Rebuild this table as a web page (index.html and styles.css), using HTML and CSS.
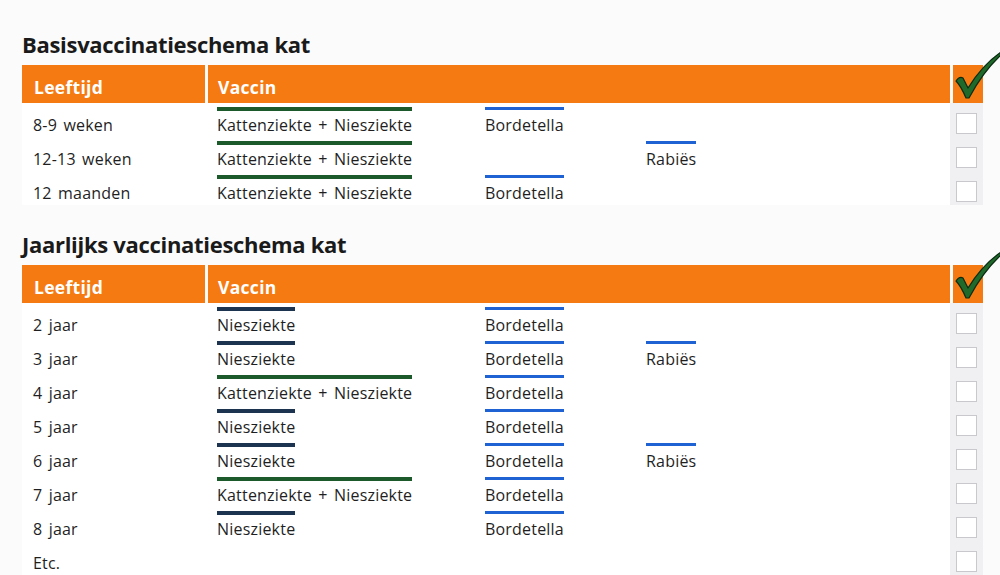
FILE: index.html
```html
<!DOCTYPE html>
<html lang="nl">
<head>
<meta charset="utf-8">
<title>Vaccinatieschema kat</title>
<link rel="stylesheet" href="styles.css">
</head>
<body>
<main class="page">
  <section class="schema">
    <h2 class="title">Basisvaccinatieschema kat</h2>
    <div class="table">
      <div class="head">
        <div class="hcell age">Leeftijd</div>
        <div class="hcell vac">Vaccin</div>
        <div class="hcell chk">
          <svg class="tick" viewBox="0 0 48 50" width="48" height="50"><path d="M2,30 C4,27 7,26 9,27 L14,37 C22,24 34,10 47,1 L48,3 C36,14 24,30 15,47 L12,47 C9,40 6,34 2,30 Z"/></svg>
        </div>
      </div>
      <div class="row">
        <div class="age">8-9 weken</div>
        <div class="vaccines"><span class="v green">Kattenziekte + Niesziekte</span><span class="v blue">Bordetella</span><span></span></div>
        <div class="box"><span></span></div>
      </div>
      <div class="row">
        <div class="age">12-13 weken</div>
        <div class="vaccines"><span class="v green">Kattenziekte + Niesziekte</span><span></span><span class="v blue">Rabiës</span></div>
        <div class="box"><span></span></div>
      </div>
      <div class="row">
        <div class="age">12 maanden</div>
        <div class="vaccines"><span class="v green">Kattenziekte + Niesziekte</span><span class="v blue">Bordetella</span><span></span></div>
        <div class="box"><span></span></div>
      </div>
    </div>
  </section>

  <section class="schema second">
    <h2 class="title">Jaarlijks vaccinatieschema kat</h2>
    <div class="table">
      <div class="head">
        <div class="hcell age">Leeftijd</div>
        <div class="hcell vac">Vaccin</div>
        <div class="hcell chk">
          <svg class="tick" viewBox="0 0 48 50" width="48" height="50"><path d="M2,30 C4,27 7,26 9,27 L14,37 C22,24 34,10 47,1 L48,3 C36,14 24,30 15,47 L12,47 C9,40 6,34 2,30 Z"/></svg>
        </div>
      </div>
      <div class="row">
        <div class="age">2 jaar</div>
        <div class="vaccines"><span class="v navy">Niesziekte</span><span class="v blue">Bordetella</span><span></span></div>
        <div class="box"><span></span></div>
      </div>
      <div class="row">
        <div class="age">3 jaar</div>
        <div class="vaccines"><span class="v navy">Niesziekte</span><span class="v blue">Bordetella</span><span class="v blue">Rabiës</span></div>
        <div class="box"><span></span></div>
      </div>
      <div class="row">
        <div class="age">4 jaar</div>
        <div class="vaccines"><span class="v green">Kattenziekte + Niesziekte</span><span class="v blue">Bordetella</span><span></span></div>
        <div class="box"><span></span></div>
      </div>
      <div class="row">
        <div class="age">5 jaar</div>
        <div class="vaccines"><span class="v navy">Niesziekte</span><span class="v blue">Bordetella</span><span></span></div>
        <div class="box"><span></span></div>
      </div>
      <div class="row">
        <div class="age">6 jaar</div>
        <div class="vaccines"><span class="v navy">Niesziekte</span><span class="v blue">Bordetella</span><span class="v blue">Rabiës</span></div>
        <div class="box"><span></span></div>
      </div>
      <div class="row">
        <div class="age">7 jaar</div>
        <div class="vaccines"><span class="v green">Kattenziekte + Niesziekte</span><span class="v blue">Bordetella</span><span></span></div>
        <div class="box"><span></span></div>
      </div>
      <div class="row">
        <div class="age">8 jaar</div>
        <div class="vaccines"><span class="v navy">Niesziekte</span><span class="v blue">Bordetella</span><span></span></div>
        <div class="box"><span></span></div>
      </div>
      <div class="row">
        <div class="age">Etc.</div>
        <div class="vaccines"><span></span><span></span><span></span></div>
        <div class="box"><span></span></div>
      </div>
    </div>
  </section>
</main>
</body>
</html>
```

FILE: styles.css
```css
html, body {
  margin: 0;
  padding: 0;
  overflow: hidden;
}
body {
  background: #fbfbfb;
  font-family: "Open Sans", "Noto Sans", "Liberation Sans", sans-serif;
  color: #1f1f1f;
}
.page {
  padding: 30px 0 0 22px;
  display: flex;
  flex-direction: column;
}
.schema.second {
  margin-top: 25px;
}
.title {
  margin: 0 0 7px 0;
  font-size: 22px;
  line-height: 28px;
  font-weight: 700;
  letter-spacing: -0.3px;
  color: #1a1a1a;
}
.table {
  display: flex;
  flex-direction: column;
  width: 961px;
}
.head {
  display: grid;
  grid-template-columns: 183px 742px 30px;
  column-gap: 3px;
  height: 38px;
}
.hcell {
  background: #f57a12;
  color: #fff;
  font-weight: 700;
  font-size: 17.5px;
  letter-spacing: 0.3px;
  display: flex;
  align-items: center;
  padding-top: 5px;
  box-sizing: border-box;
}
.hcell.age { padding-left: 12px; }
.hcell.vac { padding-left: 10px; }
.hcell.chk { position: relative; }
.tick {
  position: absolute;
  left: 1px;
  top: -14px;
  overflow: visible;
}
.tick path {
  fill: #1f6a2b;
  stroke: #0c2b12;
  stroke-width: 1.2;
  stroke-linejoin: round;
}
.row {
  display: grid;
  grid-template-columns: 186px 742px 33px;
  height: 34px;
  background: #fff;
  font-size: 16px;
  line-height: 18px;
  letter-spacing: 0.2px;
  word-spacing: 2px;
}
.row .age {
  padding: 13px 0 0 11px;
}
.vaccines {
  display: grid;
  grid-template-columns: 268px 161px 1fr;
  padding: 4px 0 0 9px;
  align-items: start;
}
.v {
  justify-self: start;
  display: inline-block;
  padding-top: 5px;
  border-top: 4px solid transparent;
}
.v.green { border-top-color: #1c5a2b; }
.v.navy { border-top-color: #1c3450; }
.v.blue { border-top-color: #1e62d4; border-top-width: 3px; padding-top: 6px; }
.box {
  background: #f0f0f3;
  display: flex;
  justify-content: center;
  padding-top: 10px;
}
.box span {
  width: 19px;
  height: 19px;
  background: #fff;
  border: 1px solid #c9c9cd;
}
```
